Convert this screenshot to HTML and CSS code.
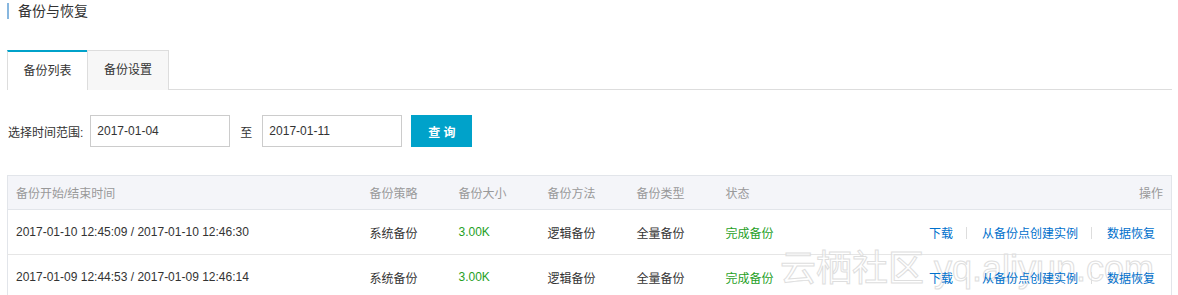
FILE: index.html
```html
<!DOCTYPE html>
<html lang="zh-CN">

<head>
    <meta charset="UTF-8">
    <meta name="viewport" content="width=device-width, initial-scale=1.0">
    <title>备份与恢复</title>
    <link rel="stylesheet" href="styles.css">
</head>

<body>
    <div class="page">
        <h2 class="page-title">备份与恢复</h2>

        <div class="tabs">
            <div class="tab active">备份列表</div>
            <div class="tab">备份设置</div>
        </div>

        <form class="query-form">
            <label for="start">选择时间范围:</label>
            <input type="text" id="start" value="2017-01-04">
            <span class="to">至</span>
            <input type="text" id="end" value="2017-01-11">
            <button type="button" class="query-btn">查 询</button>
        </form>

        <table class="backup-table">
            <colgroup>
                <col class="col-time">
                <col class="col-mid">
                <col class="col-mid">
                <col class="col-mid">
                <col class="col-mid">
                <col class="col-status">
                <col>
            </colgroup>
            <thead>
                <tr>
                    <th>备份开始/结束时间</th>
                    <th>备份策略</th>
                    <th>备份大小</th>
                    <th>备份方法</th>
                    <th>备份类型</th>
                    <th>状态</th>
                    <th class="ops">操作</th>
                </tr>
            </thead>
            <tbody>
                <tr>
                    <td>2017-01-10 12:45:09 / 2017-01-10 12:46:30</td>
                    <td>系统备份</td>
                    <td class="ok">3.00K</td>
                    <td>逻辑备份</td>
                    <td>全量备份</td>
                    <td class="ok">完成备份</td>
                    <td class="ops">
                        <a href="#">下载</a><span class="sep"></span><a href="#">从备份点创建实例</a><span class="sep"></span><a href="#">数据恢复</a>
                    </td>
                </tr>
                <tr>
                    <td>2017-01-09 12:44:53 / 2017-01-09 12:46:14</td>
                    <td>系统备份</td>
                    <td class="ok">3.00K</td>
                    <td>逻辑备份</td>
                    <td>全量备份</td>
                    <td class="ok">完成备份</td>
                    <td class="ops">
                        <a href="#">下载</a><span class="sep"></span><a href="#">从备份点创建实例</a><span class="sep"></span><a href="#">数据恢复</a>
                    </td>
                </tr>
            </tbody>
        </table>
    </div>

    <div class="watermark">云栖社区 yq.aliyun.com</div>
</body>

</html>
```

FILE: styles.css
```css
body {
    margin: 0;
    font-family: "Liberation Sans", "Noto Sans CJK SC", sans-serif;
    font-size: 12px;
    color: #333;
    background-color: #fff;
    overflow: hidden;
}

.page {
    padding: 3px 6px 0 7px;
}

.page-title {
    margin: 0;
    font-size: 14px;
    font-weight: normal;
    line-height: 16px;
    padding-left: 9px;
    border-left: 2px solid #88b7df;
}

.tabs {
    display: flex;
    margin-top: 31px;
    border-bottom: 1px solid #ddd;
}

.tab {
    width: 82px;
    height: 40px;
    line-height: 39px;
    text-align: center;
    box-sizing: border-box;
    background-color: #f7f7f7;
    border: 1px solid #ddd;
    border-bottom: none;
    margin-bottom: -1px;
}

.tab.active {
    width: 80px;
    background-color: #fff;
    border-top: 2px solid #00a2ca;
    border-right: none;
    line-height: 38px;
}

.query-form {
    display: flex;
    align-items: center;
    margin-top: 25px;
    padding-left: 1px;
}

.query-form label {
    margin-right: 7px;
}

.query-form input {
    width: 140px;
    height: 32px;
    box-sizing: border-box;
    border: 1px solid #ccc;
    padding: 0 6px;
    font-family: inherit;
    font-size: 12px;
    color: #333;
    outline: none;
}

.to {
    margin: 0 10px;
}

.query-btn {
    margin-left: 9px;
    width: 61px;
    height: 32px;
    border: none;
    background-color: #00a2ca;
    color: #fff;
    font-family: inherit;
    font-size: 12px;
    font-weight: bold;
    cursor: pointer;
}

.backup-table {
    margin-top: 28px;
    width: 100%;
    border-collapse: collapse;
    table-layout: fixed;
    border: 1px solid #e2e5ea;
}

.col-time {
    width: 354px;
}

.col-mid {
    width: 89px;
}

.col-status {
    width: 110px;
}

.backup-table th {
    height: 33px;
    background-color: #f4f5f9;
    color: #999;
    font-weight: normal;
    text-align: left;
    padding: 0 8px;
    border-bottom: 1px solid #e2e5ea;
}

.backup-table td {
    height: 44px;
    padding: 0 8px;
    border-bottom: 1px solid #e6e6e6;
    white-space: nowrap;
}

.backup-table th.ops {
    text-align: right;
}

.backup-table td.ops {
    text-align: right;
    padding-right: 16px;
}

.ok {
    color: #1fa01f;
}

.ops a {
    position: relative;
    z-index: 1;
    color: #0070cc;
    text-decoration: none;
}

.sep {
    display: inline-block;
    width: 1px;
    height: 12px;
    background-color: #ddd;
    margin: 0 15px 0 13px;
    vertical-align: -1px;
}

/* 水印 */
.watermark {
    position: absolute;
    left: 780px;
    top: 239px;
    font-size: 36px;
    white-space: nowrap;
    color: rgba(255, 255, 255, 0.55);
    -webkit-text-stroke: 1px #dedede;
    pointer-events: none;
}
```
